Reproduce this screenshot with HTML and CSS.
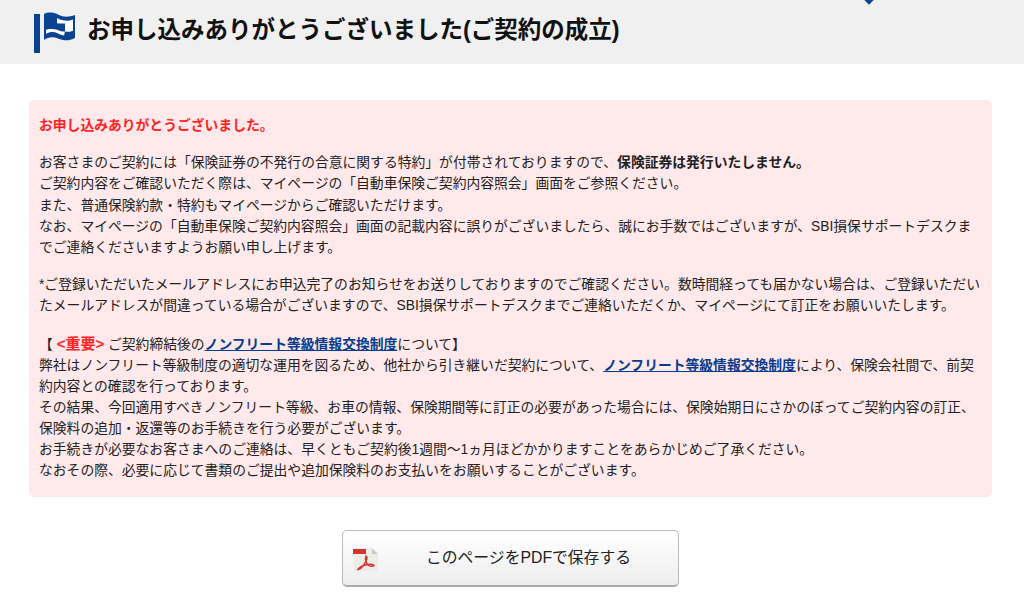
FILE: index.html
```html
<!DOCTYPE html>
<html lang="ja">
<head>
<meta charset="utf-8">
<title>お申し込みありがとうございました</title>
<link rel="stylesheet" href="styles.css">
</head>
<body>
<header class="head">
  <svg class="flag" width="42" height="42" viewBox="0 0 42 42" aria-hidden="true">
    <rect x="0" y="2" width="6" height="39" fill="#0b4392"/>
    <path d="M10 2C14 0 19 0 24 2.500C30 5.500 35 5 41 3V26C35 29 30 29 24 26.500C19 24.500 14 25 10 28Z" fill="#0b4392"/>
    <path d="M23 6C28 9 34 9.500 39 7.500V19C35 20 33 20 31 19.500V11.500H24V18C18 16.500 14 17 12 18V22C16 19.500 20 19.500 24 21.500C26 22.500 28 23 30 23.500L31 19.500C28 19.500 26 19 24 18V11.500L23 11Z" fill="#fff"/>
  </svg>
  <h1 class="title">お申し込みありがとうございました(ご契約の成立)</h1>
  <span class="marker"></span>
</header>
<main class="main">
  <section class="notice">
    <p class="lead">お申し込みありがとうございました。</p>
    <p>お客さまのご契約には「保険証券の不発行の合意に関する特約」が付帯されておりますので、<b>保険証券は発行いたしません。</b><br>
    ご契約内容をご確認いただく際は、マイページの「自動車保険ご契約内容照会」画面をご参照ください。<br>
    また、普通保険約款・特約もマイページからご確認いただけます。<br>
    なお、マイページの「自動車保険ご契約内容照会」画面の記載内容に誤りがございましたら、誠にお手数ではございますが、SBI損保サポートデスクまでご連絡くださいますようお願い申し上げます。</p>
    <p>*ご登録いただいたメールアドレスにお申込完了のお知らせをお送りしておりますのでご確認ください。数時間経っても届かない場合は、ご登録いただいたメールアドレスが間違っている場合がございますので、SBI損保サポートデスクまでご連絡いただくか、マイページにて訂正をお願いいたします。</p>
    <p>【 <b class="red">&lt;重要&gt;</b> ご契約締結後の<a href="#" class="link">ノンフリート等級情報交換制度</a>について】<br>
    弊社はノンフリート等級制度の適切な運用を図るため、他社から引き継いだ契約について、<a href="#" class="link">ノンフリート等級情報交換制度</a>により、保険会社間で、前契約内容との確認を行っております。<br>
    その結果、今回適用すべきノンフリート等級、お車の情報、保険期間等に訂正の必要があった場合には、保険始期日にさかのぼってご契約内容の訂正、保険料の追加・返還等のお手続きを行う必要がございます。<br>
    お手続きが必要なお客さまへのご連絡は、早くともご契約後1週間～1ヵ月ほどかかりますことをあらかじめご了承ください。<br>
    なおその際、必要に応じて書類のご提出や追加保険料のお支払いをお願いすることがございます。</p>
  </section>
  <div class="actions">
    <a href="#" class="pdf">
      <svg class="pdf-icon" width="26" height="24" viewBox="0 0 26 24" aria-hidden="true">
        <path d="M1 0H19L25 6V23H1Z" fill="#ecece9"/>
        <path d="M19 0L25 6H19Z" fill="#c9c9c6"/>
        <rect x="0" y="1" width="13" height="5" fill="#d8322e"/>
        <path d="M13 8C12 12 13 15 15 17C17 18.500 20 18.500 21 17.500C20 16 16 16 12 17C9 18 6 20 5 21.500C8 21.500 11 17 13 13C14 11 14.500 9 13 8Z" fill="none" stroke="#d8322e" stroke-width="1.500"/>
      </svg>
      <span>このページをPDFで保存する</span>
    </a>
  </div>
</main>
</body>
</html>
```
FILE: styles.css
```css
* { box-sizing: border-box; }
html, body { margin: 0; padding: 0; }
body {
  width: 1024px;
  height: 598px;
  overflow: hidden;
  background: #fff;
  color: #222;
  font-family: "Liberation Sans", "Noto Sans CJK JP", sans-serif;
  font-size: 13.8px;
  line-height: 21.1px;
}
.head {
  position: relative;
  display: flex;
  align-items: center;
  gap: 11px;
  height: 64px;
  padding: 0 0 4px 34px;
  background: #f0f0f0;
}
.flag { flex: none; margin-top: 5px; }
.title {
  margin: 0;
  color: #111;
  font-size: 23.5px;
  line-height: 30px;
  font-weight: 700;
}
.marker {
  position: absolute;
  left: 865px;
  top: -5px;
  width: 8px;
  height: 8px;
  background: #0b4392;
  transform: rotate(45deg);
}
.main { padding: 36px 32px 0 29px; }
.notice {
  padding: 15px 10px 1px;
  background: #ffe9eb;
  border-radius: 5px;
}
.notice p { margin: 0 0 16.3px; }
.notice p:last-child { margin-bottom: 14.3px; }
.lead { color: #f22; font-weight: 700; }
.red { color: #f22; font-size: 15px; }
.link { color: #0b3c8c; font-weight: 700; text-decoration: underline; }
.actions { display: flex; justify-content: center; margin-top: 33px; }
.pdf {
  position: relative;
  display: flex;
  align-items: center;
  justify-content: center;
  width: 337px;
  height: 57px;
  padding-left: 36px;
  color: #222;
  font-size: 15.8px;
  text-decoration: none;
  background: linear-gradient(#fff, #eeeeee);
  border: 1px solid #bbb;
  border-bottom: 2px solid #aaa;
  border-radius: 5px;
}
.pdf-icon { position: absolute; left: 10px; top: 17px; }
```
